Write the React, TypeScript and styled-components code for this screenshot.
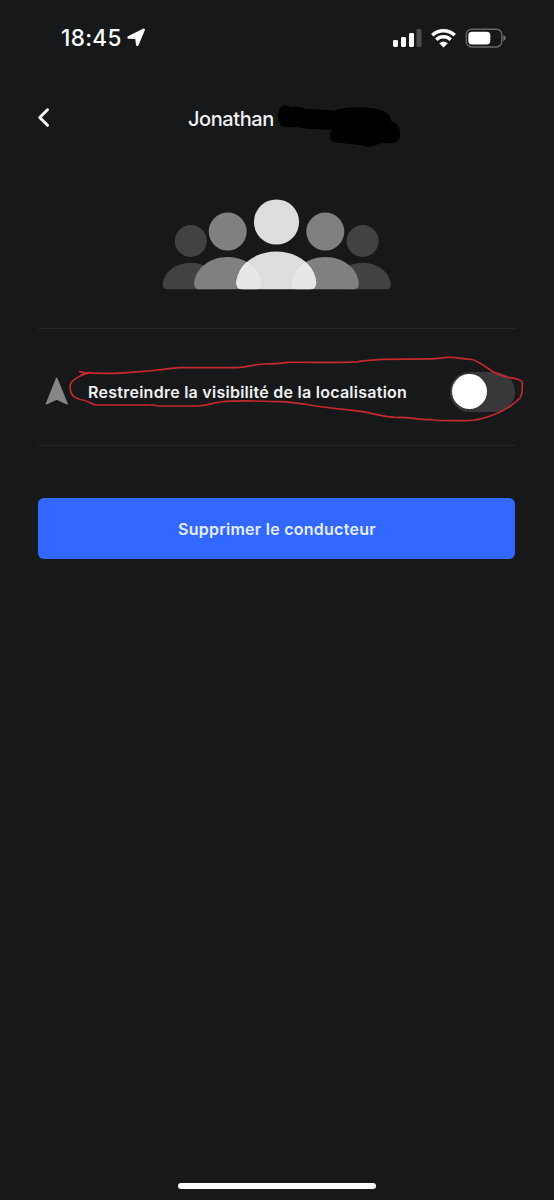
import React from 'react';
import styled, { createGlobalStyle } from 'styled-components';

const GlobalStyle = createGlobalStyle`
  * { box-sizing: border-box; }
  body { margin: 0; background: #17181a; }
`;

const Screen = styled.div`
  position: relative;
  display: flex;
  flex-direction: column;
  width: 554px;
  height: 1200px;
  overflow: hidden;
  background: #17181a;
  color: #f1f1f2;
  font-family: Inter, 'Liberation Sans', sans-serif;
`;

const StatusBar = styled.div`
  display: flex;
  align-items: center;
  justify-content: space-between;
  height: 75px;
  padding: 0 48px 0 61px;
`;

const Clock = styled.div`
  display: flex;
  align-items: center;
  gap: 5px;
  color: #fff;
`;

const Time = styled.span`
  width: 61px;
  font-size: 22.5px;
  line-height: 28px;
  font-weight: 550;
  letter-spacing: 0.35px;
  white-space: nowrap;
`;

const Header = styled.header`
  display: grid;
  grid-template-columns: 138px 1fr;
  align-items: center;
  height: 86px;
  padding-left: 37px;
`;

const BackButton = styled.button`
  display: flex;
  width: 14px;
  height: 22px;
  padding: 0;
  border: 0;
  background: none;
`;

const NameRow = styled.div`
  position: relative;
  padding: 2px 0 0 13px;
`;

const Name = styled.h1`
  margin: 0;
  font-size: 20px;
  line-height: 26px;
  font-weight: 500;
  letter-spacing: -0.42px;
`;

const Scribble = styled.svg`
  position: absolute;
  left: 102px;
  top: -1px;
`;

const Group = styled.div`
  display: flex;
  justify-content: center;
  height: 131px;
  padding-top: 37px;
`;

const Content = styled.main`
  display: flex;
  flex-direction: column;
  gap: 52px;
  margin: 36px 38.6px 0 38.4px;
`;

const SettingRow = styled.section`
  position: relative;
  display: flex;
  align-items: center;
  height: 118px;
  padding: 7px 0 0 6.6px;
  border-top: 1px solid #242628;
  border-bottom: 1px solid #242628;
`;

const SettingLabel = styled.span`
  flex: 1;
  margin: 3px 0 0 19px;
  font-size: 16px;
  line-height: 24px;
  font-weight: 600;
  letter-spacing: 0.26px;
  white-space: nowrap;
`;

const Switch = styled.button`
  display: flex;
  align-items: center;
  width: 65px;
  height: 40px;
  margin: 2px 0.4px 0 0;
  padding: 0 2px;
  border: 0;
  border-radius: 20px;
  background: #38383b;
`;

const Knob = styled.span`
  width: 35px;
  height: 35px;
  border-radius: 50%;
  background: #fff;
`;

const HandCircle = styled.svg`
  position: absolute;
  left: 27.6px;
  top: 24px;
  pointer-events: none;
`;

const PrimaryButton = styled.button`
  height: 61px;
  padding: 1px 0 0;
  margin: 0;
  border: 0;
  border-radius: 6px;
  background: #3268ff;
  color: #e4edff;
  font-family: inherit;
  font-size: 16px;
  font-weight: 600;
  letter-spacing: 0.26px;
`;

const HomeIndicator = styled.div`
  width: 198px;
  height: 6px;
  margin: auto auto 11px 178px;
  border-radius: 3px;
  background: #fff;
`;

const StatusIcons = () => (
  <svg width="114" height="24" viewBox="392 25 114 24">
    <rect x="393" y="39" width="5" height="7" rx="1.4" fill="#fff" />
    <rect x="401" y="36" width="5" height="10" rx="1.4" fill="#fff" />
    <rect x="409" y="32" width="5" height="14" rx="1.4" fill="#fff" />
    <rect x="416.5" y="28" width="5" height="18" rx="1.4" fill="#4b4c4e" />
    <g fill="none" stroke="#fff" strokeWidth="3.5">
      <path d="M432.3 34.3a16 16 0 0 1 22.4 0" />
      <path d="M436.3 38.8a10.3 10.3 0 0 1 14.4 0" />
    </g>
    <path d="M439.2 42.3q4.3-3.6 8.6 0l-4.3 4.3z" fill="#fff" />
    <rect x="466.2" y="28.2" width="35.6" height="17.8" rx="5.6" fill="none" stroke="#68696b" strokeWidth="1.4" />
    <rect x="468.3" y="30.8" width="22" height="12.6" rx="3.6" fill="#fff" />
    <path d="M503.3 34q2.4 1 2.4 3.1t-2.4 3.1z" fill="#737476" />
  </svg>
);

const People = () => (
  <svg width="230" height="92" viewBox="162 198 230 92">
    <g fill="#424243">
      <circle cx="190.8" cy="241" r="16" />
      <circle cx="362.7" cy="241" r="16" />
      <path d="M167 289.3Q162.7 289.3 162.7 284.6C163.7 272 176 262.7 190.8 262.7S218 272 219 284.6Q219 289.3 214.7 289.3Z" />
      <path d="M339 289.3Q334.7 289.3 334.7 284.6C335.7 272 348 262.7 362.7 262.7S389.8 272 390.8 284.6Q390.8 289.3 386.5 289.3Z" />
    </g>
    <g fill="#7f8080">
      <circle cx="227.7" cy="231.6" r="19" />
      <circle cx="325.3" cy="231.6" r="19" />
      <path d="M199 289.3Q194 289.3 194 283.5C195.5 268 210 257 227.6 257S259.7 268 261.2 283.5Q261.2 289.3 256.2 289.3Z" />
      <path d="M296.7 289.3Q291.7 289.3 291.7 283.5C293.2 268 307.7 257 325.3 257S357.4 268 358.9 283.5Q358.9 289.3 353.9 289.3Z" />
    </g>
    <circle cx="276.5" cy="222" r="22.6" fill="#dddddd" />
    <path d="M242 289.3Q236.3 289.3 236.3 282.5C238 264.5 255 251.6 276.3 251.6S314.6 264.5 316.2 282.5Q316.2 289.3 310.5 289.3Z" fill="#dddddd" />
    <clipPath id="frontClip">
      <path d="M242 289.3Q236.3 289.3 236.3 282.5C238 264.5 255 251.6 276.3 251.6S314.6 264.5 316.2 282.5Q316.2 289.3 310.5 289.3Z" />
    </clipPath>
    <g clipPath="url(#frontClip)" fill="#e7e7e7">
      <path d="M199 289.3Q194 289.3 194 283.5C195.5 268 210 257 227.6 257S259.7 268 261.2 283.5Q261.2 289.3 256.2 289.3Z" />
      <path d="M296.7 289.3Q291.7 289.3 291.7 283.5C293.2 268 307.7 257 325.3 257S357.4 268 358.9 283.5Q358.9 289.3 353.9 289.3Z" />
    </g>
  </svg>
);

export default function App() {
  return (
    <Screen>
      <GlobalStyle />
      <StatusBar>
        <Clock>
          <Time>18:45</Time>
          <svg width="19" height="19" viewBox="0 0 19 19">
            <path d="M1.6 9.4 16.6 1.8 10.3 16.7 9.4 9.6Z" fill="#fff" stroke="#fff" strokeWidth="2.6" strokeLinejoin="round" />
          </svg>
        </Clock>
        <StatusIcons />
      </StatusBar>
      <Header>
        <BackButton aria-label="Retour">
          <svg width="14" height="22" viewBox="0 0 14 22">
            <path d="M10.5 2.8 2.7 10.5l7.8 7.8" fill="none" stroke="#f7f7f7" strokeWidth="3" strokeLinecap="round" strokeLinejoin="round" />
          </svg>
        </BackButton>
        <NameRow>
          <Name>Jonathan</Name>
          <Scribble width="126" height="46" viewBox="277 103 126 46">
            <path d="M279 111C280 105 286 104 290 107C295 106 301 106 305 109L328 110Q332 110 335 111C343 106 366 107 376 109C384 110 391 114 391 121C398 123 401 130 400 136C399 143 391 144 383 143C376 144 373 148 364 146C353 143 342 144 334 142C329 140 329 135 332 130C323 129 307 130 298 127H284C278 126 277 118 279 111Z" fill="#000" />
          </Scribble>
        </NameRow>
      </Header>
      <Group><People /></Group>
      <Content>
        <SettingRow>
          <svg width="24" height="30" viewBox="45 376 24 30">
            <path d="M56.7 378 67.3 404 56.7 399.2 46.2 404Z" fill="#858686" stroke="#858686" strokeWidth="1.2" strokeLinejoin="round" />
          </svg>
          <SettingLabel>Restreindre la visibilité de la localisation</SettingLabel>
          <Switch role="switch" aria-checked="false"><Knob /></Switch>
          <HandCircle width="460" height="72" viewBox="66 353 460 72">
            <path d="M79.5 371.7L88 373.3C79 376 70 380 70 387C70 394 74 398 80 399.5C88 400 91 405 97 405H153L158 406H197C208 406 211 403 220 402C240 400 261 401 280 401.7C295 402 308 405 323 407L363 411.7C380 415 385 417 397 417.5C410 417 420 420 430 419.5C439 421 446 421 465 420.5C479 421 484 418 490 416C506 411 514 404 520 398C523 393 522 388 522.4 382C521 379 513 378 507 377C502 376 498 374 493 371.7C486 367 478 361 472 359.5C463 359 455 357 450 357.5C442 357 439 359 433 358.9L383 359.3C370 360 366 360 357 361.8C332 363 307 362 287 362.3C278 364 271 364 263 364C253 365 246 367 237 367.7H180C170 368 162 370 153 370.5C133 372 113 375 88 372.7L81 375" fill="none" stroke="#c5282e" strokeWidth="1.7" strokeLinecap="round" strokeLinejoin="round" />
          </HandCircle>
        </SettingRow>
        <PrimaryButton>Supprimer le conducteur</PrimaryButton>
      </Content>
      <HomeIndicator />
    </Screen>
  );
}
